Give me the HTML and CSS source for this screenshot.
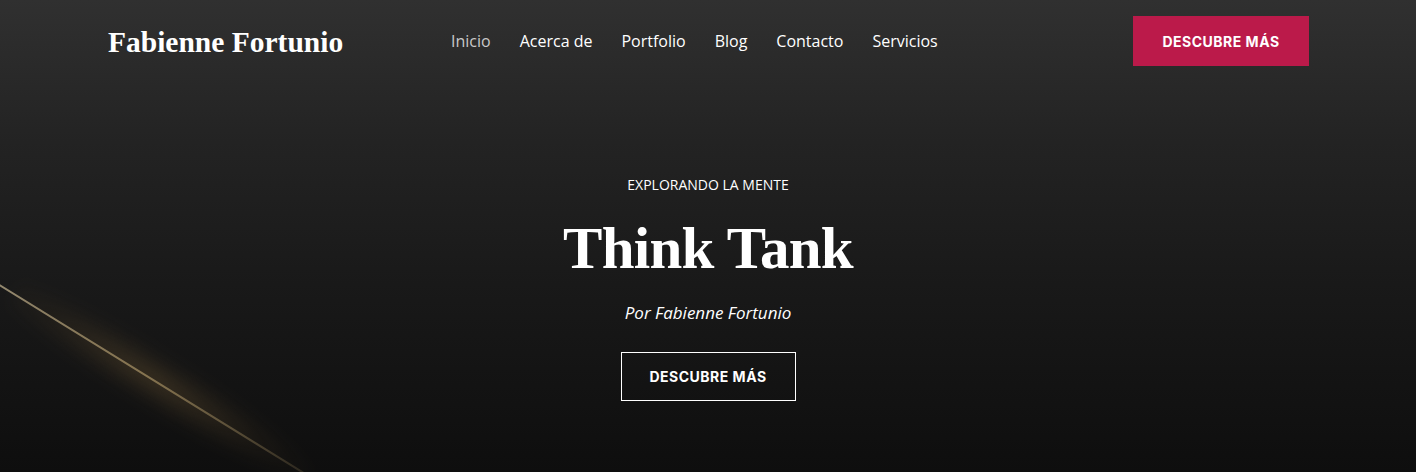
FILE: index.html
```html
<!DOCTYPE html>
<html lang="es">
<head>
    <meta charset="UTF-8">
    <title>Fabienne Fortunio</title>
    <link rel="stylesheet" href="styles.css">
</head>
<body>
    <div class="page">
        <div class="streak"></div>
        <header class="header">
            <a class="logo" href="#">Fabienne Fortunio</a>
            <nav class="nav">
                <a class="nav-link active" href="#">Inicio</a>
                <a class="nav-link" href="#">Acerca de</a>
                <a class="nav-link" href="#">Portfolio</a>
                <a class="nav-link" href="#">Blog</a>
                <a class="nav-link" href="#">Contacto</a>
                <a class="nav-link" href="#">Servicios</a>
            </nav>
            <a class="btn btn-solid" href="#">Descubre más</a>
        </header>
        <section class="hero">
            <p class="eyebrow">Explorando la mente</p>
            <h1 class="title">Think Tank</h1>
            <p class="byline">Por Fabienne Fortunio</p>
            <a class="btn btn-outline" href="#">Descubre más</a>
        </section>
    </div>
</body>
</html>
```

FILE: styles.css
```css
body {
    margin: 0;
    padding: 0;
    background-color: #0e0e0e;
    color: #fff;
    font-family: 'Open Sans', 'Noto Sans', sans-serif;
}

a {
    text-decoration: none;
    color: inherit;
}

.page {
    position: relative;
    min-height: 472px;
    overflow: hidden;
    background: linear-gradient(to bottom, #303030 0%, #232323 30%, #191919 60%, #0e0e0e 100%);
}

/* diagonal light streak bottom-left */
.streak {
    position: absolute;
    left: -20px;
    top: 272px;
    width: 440px;
    height: 2px;
    transform: rotate(31.7deg);
    transform-origin: left center;
    background: linear-gradient(to right, rgba(200, 185, 150, 0.7), rgba(180, 160, 115, 0.75) 45%, rgba(150, 130, 90, 0.35) 78%, transparent);
    border-radius: 2px;
}

.streak::before {
    content: "";
    position: absolute;
    left: 40px;
    top: -30px;
    width: 360px;
    height: 60px;
    background: radial-gradient(ellipse at 45% 50%, rgba(120, 95, 55, 0.35), rgba(90, 70, 40, 0.12) 45%, transparent 70%);
    filter: blur(6px);
}

.header {
    position: relative;
    width: 1200px;
    margin: 0 auto;
    padding-top: 16px;
    display: flex;
    align-items: center;
    height: 50px;
}

.logo {
    flex: 0 0 343px;
    font-family: 'Liberation Serif', 'DejaVu Serif', serif;
    font-weight: bold;
    font-size: 29.5px;
    color: #fff;
    position: relative;
    top: 1px;
}

.nav {
    display: flex;
    gap: 29px;
}

.nav-link {
    font-size: 16px;
    color: #fff;
}

.nav-link.active {
    color: #c9c9c9;
}

.btn {
    display: inline-flex;
    align-items: center;
    justify-content: center;
    box-sizing: border-box;
    font-family: 'Inter', 'Liberation Sans', sans-serif;
    font-weight: 700;
    font-size: 14px;
    letter-spacing: 0.5px;
    text-transform: uppercase;
    color: #fff;
}

.btn-solid {
    margin-left: auto;
    margin-right: -1px;
    width: 176px;
    height: 50px;
    background-color: #bb1a4a;
}

.btn-outline {
    width: 175px;
    height: 49px;
    border: 1px solid #fff;
}

.hero {
    position: relative;
    text-align: center;
    padding-top: 109px;
}

.eyebrow {
    margin: 0;
    font-size: 14px;
    line-height: 20px;
    text-transform: uppercase;
}

.title {
    margin: 18px 0 0;
    font-family: 'Liberation Serif', 'DejaVu Serif', serif;
    font-weight: bold;
    font-size: 59px;
    line-height: 70px;
    letter-spacing: -0.7px;
}

.byline {
    margin: 18px 0 27px;
    font-size: 17px;
    line-height: 24px;
    font-style: italic;
}
```
